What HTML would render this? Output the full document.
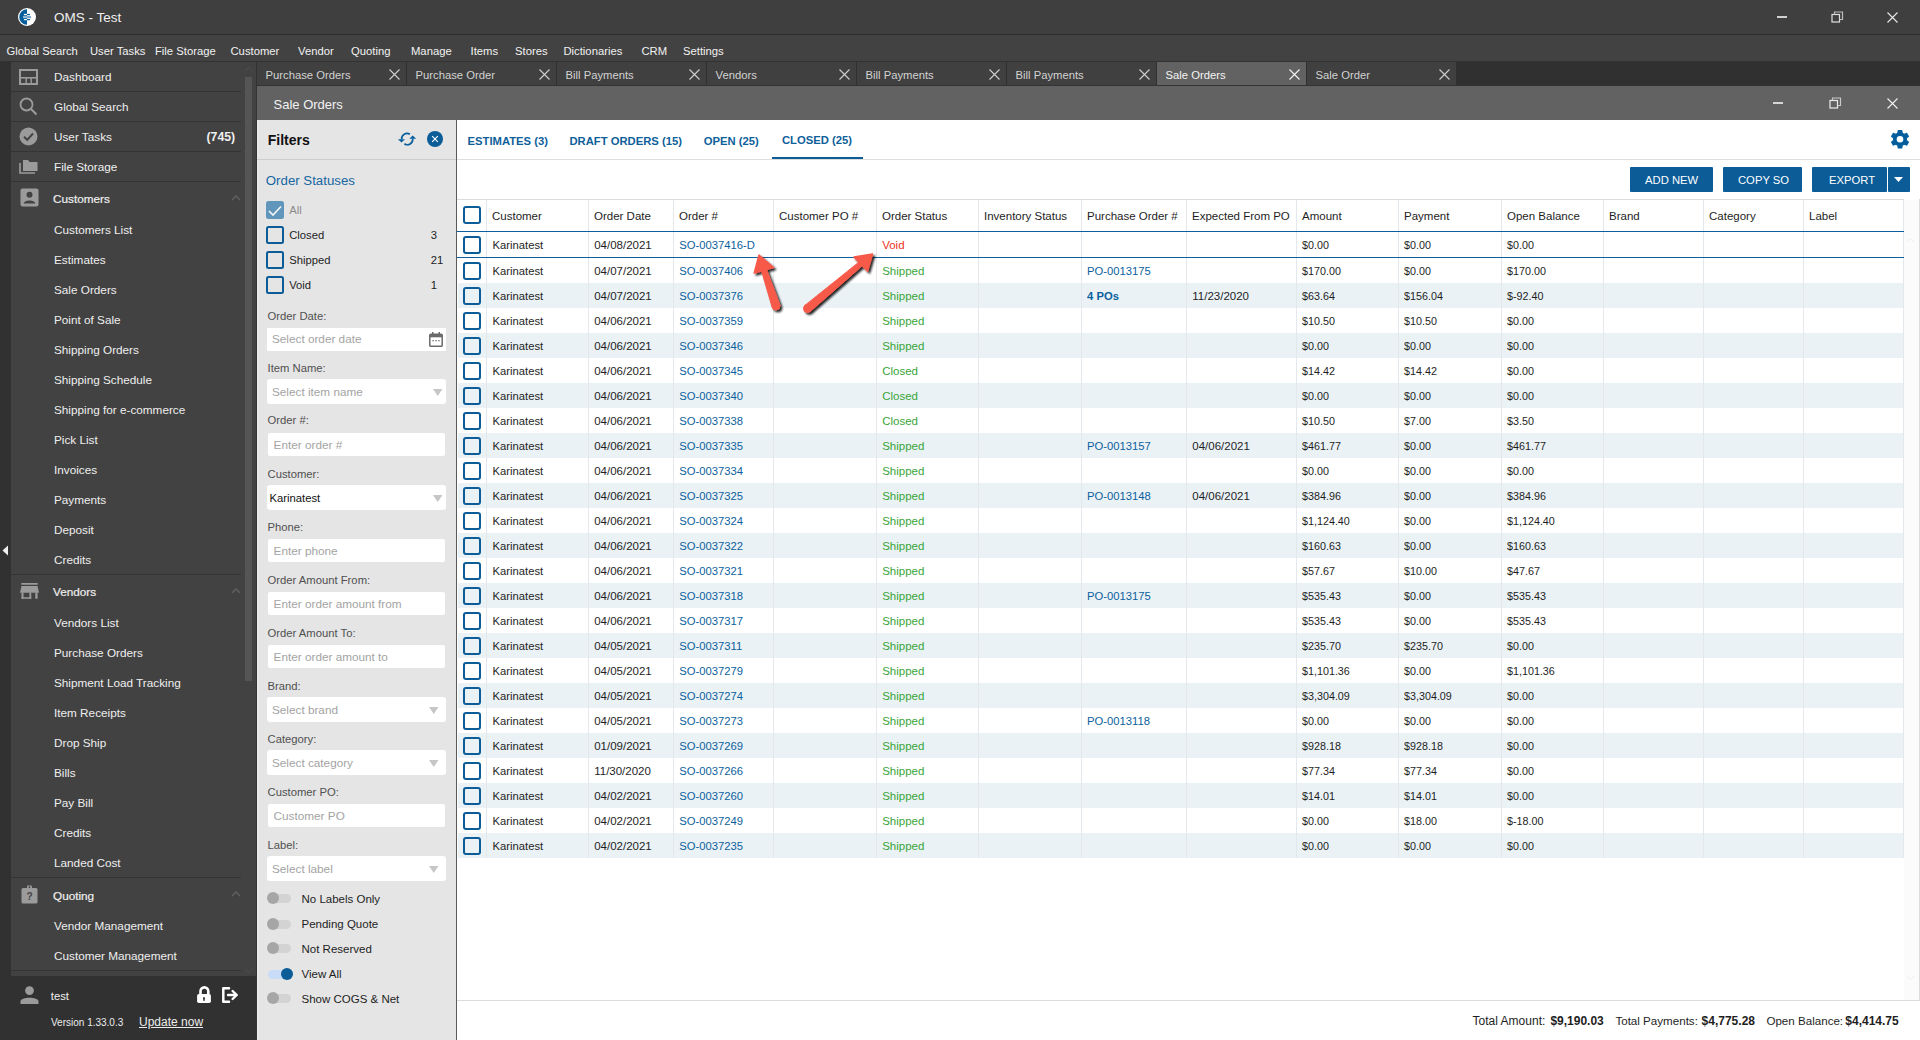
<!DOCTYPE html>
<html><head><meta charset="utf-8"><style>
html,body{margin:0;padding:0;width:1920px;height:1040px;overflow:hidden;background:#2e2e2e;}
body>div,body>svg{position:absolute;}
.t{position:absolute;font-family:"Liberation Sans", sans-serif;line-height:20px;white-space:pre;}
</style></head><body>
<div style="left:0px;top:0px;width:1920px;height:34px;background:#3f3f3f;"></div>
<div style="left:0px;top:34px;width:1920px;height:1px;background:#2c2c2c;"></div>
<div style="left:0px;top:35px;width:1920px;height:26px;background:#424242;"></div>
<div style="left:0px;top:61px;width:1920px;height:1px;background:#323232;"></div>
<div style="left:0px;top:62px;width:11px;height:978px;background:#313131;"></div>
<div style="left:11px;top:62px;width:245px;height:914px;background:#424242;"></div>
<div style="left:245px;top:77px;width:7px;height:604px;background:#555555;"></div>
<div style="left:256px;top:62px;width:1px;height:978px;background:#333333;"></div>
<div style="left:0px;top:976px;width:256px;height:64px;background:#313131;"></div>
<div style="left:257px;top:62px;width:1663px;height:24px;background:#303030;"></div>
<div style="left:257px;top:86px;width:1663px;height:34px;background:#626262;"></div>
<div style="left:257px;top:120px;width:199px;height:920px;background:#e5e5e5;"></div>
<div style="left:456px;top:120px;width:1px;height:920px;background:#5a5a5a;"></div>
<div style="left:457px;top:120px;width:1463px;height:920px;background:#ffffff;"></div>
<div style="left:257px;top:120px;width:1px;height:920px;background:#ededed;"></div>
<svg style="position:absolute;left:17px;top:7px" width="20" height="20" viewBox="0 0 20 20">
<circle cx="10" cy="10" r="9" fill="#ffffff"/>
<path d="M10 2.2 A7.8 7.8 0 0 0 10 17.8 Z" fill="#045e9c"/>
<rect x="6.9" y="6.9" width="3.1" height="1.3" fill="#fff"/><rect x="10" y="6.9" width="3" height="1.3" fill="#045e9c"/>
<rect x="6" y="9.3" width="4" height="1.5" fill="#c4d7e6"/><rect x="10" y="9.3" width="4" height="1.5" fill="#4a89bb"/>
<rect x="6.9" y="11.9" width="3.1" height="1.3" fill="#fff"/><rect x="10" y="11.9" width="3" height="1.3" fill="#045e9c"/>
</svg>
<div class="t" style="left:54px;top:8.32px;font-size:13.5px;color:#f0f0f0;font-weight:400;">OMS - Test</div>
<div style="left:1777px;top:16px;width:10px;height:2px;background:#d0d0d0;"></div>
<svg style="position:absolute;left:1831px;top:11px" width="13" height="12" viewBox="0 0 13 12"><rect x="1" y="3.5" width="7.5" height="7.5" fill="none" stroke="#e0e0e0" stroke-width="1.2"/><path d="M3.5 3.5 V1 H11.5 V8.5 H8.5" fill="none" stroke="#bdbdbd" stroke-width="1.2"/></svg>
<svg style="position:absolute;left:1887px;top:12px" width="11" height="11" viewBox="0 0 11 11"><path d="M0.5 0.5 L10.5 10.5 M10.5 0.5 L0.5 10.5" stroke="#e8e8e8" stroke-width="1.1"/></svg>
<div class="t" style="left:6.5px;top:41.10px;font-size:11.25px;color:#f2f2f2;font-weight:400;">Global Search</div>
<div class="t" style="left:90px;top:41.10px;font-size:11.25px;color:#f2f2f2;font-weight:400;">User Tasks</div>
<div class="t" style="left:155px;top:41.10px;font-size:11.25px;color:#f2f2f2;font-weight:400;">File Storage</div>
<div class="t" style="left:230.5px;top:41.10px;font-size:11.25px;color:#f2f2f2;font-weight:400;">Customer</div>
<div class="t" style="left:298px;top:41.10px;font-size:11.25px;color:#f2f2f2;font-weight:400;">Vendor</div>
<div class="t" style="left:351px;top:41.10px;font-size:11.25px;color:#f2f2f2;font-weight:400;">Quoting</div>
<div class="t" style="left:411px;top:41.10px;font-size:11.25px;color:#f2f2f2;font-weight:400;">Manage</div>
<div class="t" style="left:470.5px;top:41.10px;font-size:11.25px;color:#f2f2f2;font-weight:400;">Items</div>
<div class="t" style="left:515px;top:41.10px;font-size:11.25px;color:#f2f2f2;font-weight:400;">Stores</div>
<div class="t" style="left:563.5px;top:41.10px;font-size:11.25px;color:#f2f2f2;font-weight:400;">Dictionaries</div>
<div class="t" style="left:641.5px;top:41.10px;font-size:11.25px;color:#f2f2f2;font-weight:400;">CRM</div>
<div class="t" style="left:683px;top:41.10px;font-size:11.25px;color:#f2f2f2;font-weight:400;">Settings</div>
<div style="left:11px;top:91px;width:230px;height:1px;background:#343434;"></div>
<div style="left:11px;top:121px;width:230px;height:1px;background:#343434;"></div>
<div style="left:11px;top:151px;width:230px;height:1px;background:#343434;"></div>
<div style="left:11px;top:181px;width:230px;height:1px;background:#343434;"></div>
<div style="left:11px;top:574px;width:230px;height:1px;background:#343434;"></div>
<div style="left:11px;top:877px;width:230px;height:1px;background:#343434;"></div>
<div style="left:11px;top:970px;width:230px;height:1px;background:#343434;"></div>
<div class="t" style="left:54px;top:66.93px;font-size:11.75px;color:#efefef;font-weight:400;">Dashboard</div>
<div class="t" style="left:54px;top:96.93px;font-size:11.75px;color:#efefef;font-weight:400;">Global Search</div>
<div class="t" style="left:54px;top:126.93px;font-size:11.75px;color:#efefef;font-weight:400;">User Tasks</div>
<div class="t" style="left:206.5px;top:126.76px;font-size:12.25px;color:#efefef;font-weight:700;">(745)</div>
<div class="t" style="left:54px;top:156.93px;font-size:11.75px;color:#efefef;font-weight:400;">File Storage</div>
<div class="t" style="left:53px;top:189.43px;font-size:11.75px;color:#efefef;font-weight:400;-webkit-text-stroke:0.2px #efefef;">Customers</div>
<div class="t" style="left:54px;top:219.93px;font-size:11.75px;color:#efefef;font-weight:400;">Customers List</div>
<div class="t" style="left:54px;top:249.93px;font-size:11.75px;color:#efefef;font-weight:400;">Estimates</div>
<div class="t" style="left:54px;top:279.93px;font-size:11.75px;color:#efefef;font-weight:400;">Sale Orders</div>
<div class="t" style="left:54px;top:309.93px;font-size:11.75px;color:#efefef;font-weight:400;">Point of Sale</div>
<div class="t" style="left:54px;top:339.93px;font-size:11.75px;color:#efefef;font-weight:400;">Shipping Orders</div>
<div class="t" style="left:54px;top:369.93px;font-size:11.75px;color:#efefef;font-weight:400;">Shipping Schedule</div>
<div class="t" style="left:54px;top:399.93px;font-size:11.75px;color:#efefef;font-weight:400;">Shipping for e-commerce</div>
<div class="t" style="left:54px;top:429.93px;font-size:11.75px;color:#efefef;font-weight:400;">Pick List</div>
<div class="t" style="left:54px;top:459.93px;font-size:11.75px;color:#efefef;font-weight:400;">Invoices</div>
<div class="t" style="left:54px;top:489.93px;font-size:11.75px;color:#efefef;font-weight:400;">Payments</div>
<div class="t" style="left:54px;top:519.93px;font-size:11.75px;color:#efefef;font-weight:400;">Deposit</div>
<div class="t" style="left:54px;top:549.93px;font-size:11.75px;color:#efefef;font-weight:400;">Credits</div>
<div class="t" style="left:53px;top:581.93px;font-size:11.75px;color:#efefef;font-weight:400;-webkit-text-stroke:0.2px #efefef;">Vendors</div>
<div class="t" style="left:54px;top:612.93px;font-size:11.75px;color:#efefef;font-weight:400;">Vendors List</div>
<div class="t" style="left:54px;top:642.93px;font-size:11.75px;color:#efefef;font-weight:400;">Purchase Orders</div>
<div class="t" style="left:54px;top:672.93px;font-size:11.75px;color:#efefef;font-weight:400;">Shipment Load Tracking</div>
<div class="t" style="left:54px;top:702.93px;font-size:11.75px;color:#efefef;font-weight:400;">Item Receipts</div>
<div class="t" style="left:54px;top:732.93px;font-size:11.75px;color:#efefef;font-weight:400;">Drop Ship</div>
<div class="t" style="left:54px;top:762.93px;font-size:11.75px;color:#efefef;font-weight:400;">Bills</div>
<div class="t" style="left:54px;top:792.93px;font-size:11.75px;color:#efefef;font-weight:400;">Pay Bill</div>
<div class="t" style="left:54px;top:822.93px;font-size:11.75px;color:#efefef;font-weight:400;">Credits</div>
<div class="t" style="left:54px;top:852.93px;font-size:11.75px;color:#efefef;font-weight:400;">Landed Cost</div>
<div class="t" style="left:53px;top:885.93px;font-size:11.75px;color:#efefef;font-weight:400;-webkit-text-stroke:0.2px #efefef;">Quoting</div>
<div class="t" style="left:54px;top:915.93px;font-size:11.75px;color:#efefef;font-weight:400;">Vendor Management</div>
<div class="t" style="left:54px;top:945.93px;font-size:11.75px;color:#efefef;font-weight:400;">Customer Management</div>
<svg style="position:absolute;left:231px;top:194px" width="10" height="7" viewBox="0 0 10 7"><path d="M1 6 L5 2 L9 6" fill="none" stroke="#5e5e5e" stroke-width="1.6"/></svg>
<svg style="position:absolute;left:231px;top:587px" width="10" height="7" viewBox="0 0 10 7"><path d="M1 6 L5 2 L9 6" fill="none" stroke="#5e5e5e" stroke-width="1.6"/></svg>
<svg style="position:absolute;left:231px;top:890px" width="10" height="7" viewBox="0 0 10 7"><path d="M1 6 L5 2 L9 6" fill="none" stroke="#5e5e5e" stroke-width="1.6"/></svg>
<svg style="position:absolute;left:244px;top:66px" width="9" height="6" viewBox="0 0 9 6"><path d="M1 5 L4.5 1.5 L8 5" fill="none" stroke="#4e4e4e" stroke-width="1"/></svg>
<svg style="position:absolute;left:244px;top:968px" width="9" height="6" viewBox="0 0 9 6"><path d="M1 1 L4.5 4.5 L8 1" fill="none" stroke="#4e4e4e" stroke-width="1"/></svg>
<svg style="position:absolute;left:2px;top:545px" width="7" height="11" viewBox="0 0 7 11"><path d="M6 0.5 L0.5 5.5 L6 10.5 Z" fill="#f0f0f0"/></svg>
<svg style="position:absolute;left:19px;top:69px" width="19" height="16" viewBox="0 0 19 16"><rect x="1" y="1" width="17" height="14" fill="none" stroke="#9b9b9b" stroke-width="2"/><rect x="1" y="8" width="17" height="1.6" fill="#9b9b9b"/><rect x="6.5" y="8" width="1.4" height="7" fill="#9b9b9b"/><rect x="11.5" y="8" width="1.4" height="7" fill="#9b9b9b"/></svg>
<svg style="position:absolute;left:19px;top:97px" width="19" height="19" viewBox="0 0 19 19"><circle cx="7.5" cy="7.5" r="6" fill="none" stroke="#9b9b9b" stroke-width="1.8"/><path d="M11.8 11.8 L17.5 17.5" stroke="#9b9b9b" stroke-width="2"/></svg>
<svg style="position:absolute;left:19px;top:127px" width="19" height="19" viewBox="0 0 19 19"><circle cx="9.5" cy="9.5" r="9" fill="#9b9b9b"/><path d="M5 9.8 L8.2 12.8 L14 6.5" fill="none" stroke="#424242" stroke-width="1.9"/></svg>
<svg style="position:absolute;left:19px;top:159px" width="19" height="15" viewBox="0 0 19 15"><path d="M4 1 H9 L10.5 3 H18.5 V12 H4 Z" fill="#9b9b9b"/><path d="M1 4 V14 H16" fill="none" stroke="#9b9b9b" stroke-width="1.6"/></svg>
<svg style="position:absolute;left:20px;top:188px" width="19" height="19" viewBox="0 0 19 19"><rect x="0.5" y="0.5" width="18" height="18" rx="2" fill="#9b9b9b"/><circle cx="9.5" cy="6.8" r="3" fill="#424242"/><path d="M3.8 15.5 C4 11.5 15 11.5 15.2 15.5 Z" fill="#424242"/></svg>
<svg style="position:absolute;left:20px;top:582px" width="20" height="18" viewBox="0 0 20 18"><g fill="#9b9b9b"><rect x="1.25" y="1" width="16.35" height="1.75"/><path d="M1.5 4.1 H17.5 L19 10.75 H0 Z"/><rect x="1.5" y="10.5" width="2" height="6.25"/><rect x="1.5" y="15.25" width="9.75" height="1.5"/><rect x="9.4" y="10.5" width="1.85" height="6.25"/><rect x="15.25" y="10.5" width="2.35" height="6.25"/></g></svg>
<svg style="position:absolute;left:21px;top:885px" width="17" height="19" viewBox="0 0 17 19"><rect x="0.5" y="3" width="16" height="15.5" rx="1.5" fill="#9b9b9b"/><rect x="6" y="0.5" width="5" height="4" rx="1" fill="#9b9b9b"/><circle cx="8.5" cy="2.2" r="0.9" fill="#424242"/><text x="8.5" y="14.8" font-family="Liberation Sans" font-size="10" font-weight="700" fill="#424242" text-anchor="middle">?</text></svg>
<svg style="position:absolute;left:20px;top:986px" width="19" height="18" viewBox="0 0 19 18"><circle cx="9.5" cy="4.6" r="4.4" fill="#9b9b9b"/><path d="M0.5 18 V15.5 C0.5 10.5 18.5 10.5 18.5 15.5 V18 Z" fill="#9b9b9b"/></svg>
<div class="t" style="left:50.8px;top:986.10px;font-size:11.25px;color:#f0f0f0;font-weight:400;">test</div>
<svg style="position:absolute;left:197px;top:986px" width="15" height="18" viewBox="0 0 15 18"><path d="M3.5 8.5 V5.3 A3.9 3.9 0 0 1 11.3 5.3 V8.5" fill="none" stroke="#ffffff" stroke-width="2.6"/><rect x="0.1" y="8" width="13.8" height="9" rx="1.8" fill="#ffffff"/><path d="M6.1 12.8 A1 1 0 1 1 7.9 12.8 L7.5 15 H6.5 Z" fill="#313131"/></svg>
<svg style="position:absolute;left:221px;top:986px" width="18" height="18" viewBox="0 0 18 18"><path d="M8 2.3 H2.3 V15.7 H8" fill="none" stroke="#ffffff" stroke-width="2.5" stroke-linejoin="round" stroke-linecap="round"/><path d="M7 9 H15.5 M11.6 5 L15.8 9 L11.6 13" fill="none" stroke="#ffffff" stroke-width="2.4" stroke-linecap="round" stroke-linejoin="round"/></svg>
<div class="t" style="left:51px;top:1012.53px;font-size:10px;color:#ececec;font-weight:400;">Version 1.33.0.3</div>
<div class="t" style="left:139px;top:1011.84px;font-size:12px;color:#ececec;font-weight:400;text-decoration:underline;">Update now</div>
<div class="t" style="left:273.5px;top:94.50px;font-size:13px;color:#f2f2f2;font-weight:400;">Sale Orders</div>
<div style="left:1773px;top:102px;width:10px;height:2px;background:#d6d6d6;"></div>
<svg style="position:absolute;left:1829px;top:97px" width="13" height="12" viewBox="0 0 13 12"><rect x="1" y="3.5" width="7.5" height="7.5" fill="none" stroke="#ececec" stroke-width="1.2"/><path d="M3.5 3.5 V1 H11.5 V8.5 H8.5" fill="none" stroke="#c8c8c8" stroke-width="1.2"/></svg>
<svg style="position:absolute;left:1887px;top:98px" width="11" height="11" viewBox="0 0 11 11"><path d="M0.5 0.5 L10.5 10.5 M10.5 0.5 L0.5 10.5" stroke="#f0f0f0" stroke-width="1.1"/></svg>
<div style="left:257px;top:62px;width:149px;height:23px;background:#404040;"></div>
<div class="t" style="left:265.5px;top:65.10px;font-size:11.25px;color:#d2d2d2;font-weight:400;">Purchase Orders</div>
<svg style="position:absolute;left:389px;top:69px" width="11" height="11" viewBox="0 0 11 11"><path d="M0.5 0.5 L10.5 10.5 M10.5 0.5 L0.5 10.5" stroke="#d0d0d0" stroke-width="1.1"/></svg>
<div style="left:407px;top:62px;width:149px;height:23px;background:#404040;"></div>
<div class="t" style="left:415.5px;top:65.10px;font-size:11.25px;color:#d2d2d2;font-weight:400;">Purchase Order</div>
<svg style="position:absolute;left:539px;top:69px" width="11" height="11" viewBox="0 0 11 11"><path d="M0.5 0.5 L10.5 10.5 M10.5 0.5 L0.5 10.5" stroke="#d0d0d0" stroke-width="1.1"/></svg>
<div style="left:557px;top:62px;width:149px;height:23px;background:#404040;"></div>
<div class="t" style="left:565.5px;top:65.10px;font-size:11.25px;color:#d2d2d2;font-weight:400;">Bill Payments</div>
<svg style="position:absolute;left:689px;top:69px" width="11" height="11" viewBox="0 0 11 11"><path d="M0.5 0.5 L10.5 10.5 M10.5 0.5 L0.5 10.5" stroke="#d0d0d0" stroke-width="1.1"/></svg>
<div style="left:707px;top:62px;width:149px;height:23px;background:#404040;"></div>
<div class="t" style="left:715.5px;top:65.10px;font-size:11.25px;color:#d2d2d2;font-weight:400;">Vendors</div>
<svg style="position:absolute;left:839px;top:69px" width="11" height="11" viewBox="0 0 11 11"><path d="M0.5 0.5 L10.5 10.5 M10.5 0.5 L0.5 10.5" stroke="#d0d0d0" stroke-width="1.1"/></svg>
<div style="left:857px;top:62px;width:149px;height:23px;background:#404040;"></div>
<div class="t" style="left:865.5px;top:65.10px;font-size:11.25px;color:#d2d2d2;font-weight:400;">Bill Payments</div>
<svg style="position:absolute;left:989px;top:69px" width="11" height="11" viewBox="0 0 11 11"><path d="M0.5 0.5 L10.5 10.5 M10.5 0.5 L0.5 10.5" stroke="#d0d0d0" stroke-width="1.1"/></svg>
<div style="left:1007px;top:62px;width:149px;height:23px;background:#404040;"></div>
<div class="t" style="left:1015.5px;top:65.10px;font-size:11.25px;color:#d2d2d2;font-weight:400;">Bill Payments</div>
<svg style="position:absolute;left:1139px;top:69px" width="11" height="11" viewBox="0 0 11 11"><path d="M0.5 0.5 L10.5 10.5 M10.5 0.5 L0.5 10.5" stroke="#d0d0d0" stroke-width="1.1"/></svg>
<div style="left:1157px;top:62px;width:149px;height:23px;background:#626262;"></div>
<div class="t" style="left:1165.5px;top:65.10px;font-size:11.25px;color:#f4f4f4;font-weight:400;">Sale Orders</div>
<svg style="position:absolute;left:1289px;top:69px" width="11" height="11" viewBox="0 0 11 11"><path d="M0.5 0.5 L10.5 10.5 M10.5 0.5 L0.5 10.5" stroke="#f4f4f4" stroke-width="1.1"/></svg>
<div style="left:1307px;top:62px;width:149px;height:23px;background:#404040;"></div>
<div class="t" style="left:1315.5px;top:65.10px;font-size:11.25px;color:#d2d2d2;font-weight:400;">Sale Order</div>
<svg style="position:absolute;left:1439px;top:69px" width="11" height="11" viewBox="0 0 11 11"><path d="M0.5 0.5 L10.5 10.5 M10.5 0.5 L0.5 10.5" stroke="#d0d0d0" stroke-width="1.1"/></svg>
<div style="left:257px;top:85px;width:1663px;height:1px;background:#333333;"></div>
<div class="t" style="left:267.7px;top:129.75px;font-size:14px;color:#111111;font-weight:700;">Filters</div>
<svg style="position:absolute;left:394px;top:128px" width="24" height="20" viewBox="0 0 24 20"><g fill="none" stroke="#0b5f9c" stroke-width="1.7"><path d="M15.9 6.3 A5.3 5.3 0 0 0 7.7 11.3"/><path d="M10.4 15.7 A5.3 5.3 0 0 0 18.7 10.7"/></g><g fill="#0b5f9c"><path d="M3.9 11.2 H11 L7.5 14.6 Z"/><path d="M15.2 10.8 H22.2 L18.7 7.4 Z"/></g></svg>
<svg style="position:absolute;left:427px;top:131px" width="16" height="16" viewBox="0 0 16 16"><circle cx="8" cy="8" r="8" fill="#0b5c97"/><path d="M5.2 5.2 L10.8 10.8 M10.8 5.2 L5.2 10.8" stroke="#fff" stroke-width="1.15"/></svg>
<div style="left:257px;top:159px;width:199px;height:1px;background:#cdcdcd;"></div>
<div class="t" style="left:265.8px;top:171.41px;font-size:13.25px;color:#1565a2;font-weight:400;">Order Statuses</div>
<div style="left:266px;top:201px;width:18px;height:18px;background:#6096bb;border-radius:2.5px;"></div>
<svg style="position:absolute;left:266px;top:201px" width="18" height="18" viewBox="0 0 18 18"><path d="M3 10 L7 14 L15 5.5" fill="none" stroke="#f4f4f4" stroke-width="1.7"/></svg>
<div class="t" style="left:289.2px;top:200.10px;font-size:11.25px;color:#8c8c8c;font-weight:400;">All</div>
<div style="left:266px;top:226px;width:18px;height:18px;background:transparent;box-sizing:border-box;border:2px solid #0b5c97;border-radius:2.5px;"></div>
<div class="t" style="left:289.2px;top:225.10px;font-size:11.25px;color:#1e1e1e;font-weight:400;">Closed</div>
<div class="t" style="left:430.8px;top:225.10px;font-size:11.25px;color:#1e1e1e;font-weight:400;">3</div>
<div style="left:266px;top:251px;width:18px;height:18px;background:transparent;box-sizing:border-box;border:2px solid #0b5c97;border-radius:2.5px;"></div>
<div class="t" style="left:289.2px;top:250.10px;font-size:11.25px;color:#1e1e1e;font-weight:400;">Shipped</div>
<div class="t" style="left:430.8px;top:250.10px;font-size:11.25px;color:#1e1e1e;font-weight:400;">21</div>
<div style="left:266px;top:276px;width:18px;height:18px;background:transparent;box-sizing:border-box;border:2px solid #0b5c97;border-radius:2.5px;"></div>
<div class="t" style="left:289.2px;top:275.10px;font-size:11.25px;color:#1e1e1e;font-weight:400;">Void</div>
<div class="t" style="left:430.8px;top:275.10px;font-size:11.25px;color:#1e1e1e;font-weight:400;">1</div>
<div class="t" style="left:267.6px;top:306.30px;font-size:11.25px;color:#505050;font-weight:400;">Order Date:</div>
<div style="left:267px;top:328px;width:179px;height:23px;background:#ffffff;"></div>
<div class="t" style="left:272px;top:329.43px;font-size:11.75px;color:#a3a3a3;font-weight:400;">Select order date</div>
<svg style="position:absolute;left:429px;top:332px" width="14" height="15" viewBox="0 0 14 15"><rect x="0.8" y="2.3" width="12.4" height="12" rx="1" fill="none" stroke="#6a6a6a" stroke-width="1.5"/><rect x="0.8" y="2.3" width="12.4" height="3" fill="#6a6a6a"/><rect x="3" y="0" width="1.5" height="3" fill="#6a6a6a"/><rect x="9.5" y="0" width="1.5" height="3" fill="#6a6a6a"/><rect x="3.5" y="8" width="1.3" height="1.3" fill="#6a6a6a"/><rect x="6.4" y="8" width="1.3" height="1.3" fill="#6a6a6a"/><rect x="9.3" y="8" width="1.3" height="1.3" fill="#6a6a6a"/></svg>
<div class="t" style="left:267.6px;top:357.80px;font-size:11.25px;color:#505050;font-weight:400;">Item Name:</div>
<div style="left:267px;top:379px;width:179px;height:25px;background:#ffffff;border-radius:3px;"></div>
<div class="t" style="left:272px;top:381.93px;font-size:11.75px;color:#a3a3a3;font-weight:400;">Select item name</div>
<svg style="position:absolute;left:432.5px;top:389px" width="10" height="7" viewBox="0 0 10 7"><path d="M0 0 H9.5 L4.75 7 Z" fill="#c6c6c6"/></svg>
<div class="t" style="left:267.6px;top:410.10px;font-size:11.25px;color:#505050;font-weight:400;">Order #:</div>
<div style="left:268px;top:433px;width:177px;height:23px;background:#ffffff;border-radius:2px;"></div>
<div class="t" style="left:273.6px;top:434.93px;font-size:11.75px;color:#a3a3a3;font-weight:400;">Enter order #</div>
<div class="t" style="left:267.6px;top:463.90px;font-size:11.25px;color:#505050;font-weight:400;">Customer:</div>
<div style="left:267px;top:485px;width:179px;height:25px;background:#ffffff;border-radius:3px;"></div>
<div class="t" style="left:269.6px;top:487.70px;font-size:11.25px;color:#111111;font-weight:400;">Karinatest</div>
<svg style="position:absolute;left:432.5px;top:495px" width="10" height="7" viewBox="0 0 10 7"><path d="M0 0 H9.5 L4.75 7 Z" fill="#c6c6c6"/></svg>
<div class="t" style="left:267.6px;top:516.80px;font-size:11.25px;color:#505050;font-weight:400;">Phone:</div>
<div style="left:268px;top:539px;width:177px;height:23px;background:#ffffff;border-radius:2px;"></div>
<div class="t" style="left:273.6px;top:540.93px;font-size:11.75px;color:#a3a3a3;font-weight:400;">Enter phone</div>
<div class="t" style="left:267.6px;top:569.50px;font-size:11.25px;color:#505050;font-weight:400;">Order Amount From:</div>
<div style="left:268px;top:592px;width:177px;height:23px;background:#ffffff;border-radius:2px;"></div>
<div class="t" style="left:273.6px;top:593.93px;font-size:11.75px;color:#a3a3a3;font-weight:400;">Enter order amount from</div>
<div class="t" style="left:267.6px;top:622.90px;font-size:11.25px;color:#505050;font-weight:400;">Order Amount To:</div>
<div style="left:268px;top:645px;width:177px;height:23px;background:#ffffff;border-radius:2px;"></div>
<div class="t" style="left:273.6px;top:646.93px;font-size:11.75px;color:#a3a3a3;font-weight:400;">Enter order amount to</div>
<div class="t" style="left:267.6px;top:676.10px;font-size:11.25px;color:#505050;font-weight:400;">Brand:</div>
<div style="left:267px;top:697px;width:179px;height:25px;background:#ffffff;border-radius:3px;"></div>
<div class="t" style="left:272px;top:699.93px;font-size:11.75px;color:#a3a3a3;font-weight:400;">Select brand</div>
<svg style="position:absolute;left:428.5px;top:707px" width="10" height="7" viewBox="0 0 10 7"><path d="M0 0 H9.5 L4.75 7 Z" fill="#c6c6c6"/></svg>
<div class="t" style="left:267.6px;top:728.90px;font-size:11.25px;color:#505050;font-weight:400;">Category:</div>
<div style="left:267px;top:750px;width:179px;height:25px;background:#ffffff;border-radius:3px;"></div>
<div class="t" style="left:272px;top:752.93px;font-size:11.75px;color:#a3a3a3;font-weight:400;">Select category</div>
<svg style="position:absolute;left:428.5px;top:760px" width="10" height="7" viewBox="0 0 10 7"><path d="M0 0 H9.5 L4.75 7 Z" fill="#c6c6c6"/></svg>
<div class="t" style="left:267.6px;top:782.10px;font-size:11.25px;color:#505050;font-weight:400;">Customer PO:</div>
<div style="left:268px;top:804px;width:177px;height:23px;background:#ffffff;border-radius:2px;"></div>
<div class="t" style="left:273.6px;top:805.93px;font-size:11.75px;color:#a3a3a3;font-weight:400;">Customer PO</div>
<div class="t" style="left:267.6px;top:835.10px;font-size:11.25px;color:#505050;font-weight:400;">Label:</div>
<div style="left:267px;top:856px;width:179px;height:25px;background:#ffffff;border-radius:3px;"></div>
<div class="t" style="left:272px;top:858.93px;font-size:11.75px;color:#a3a3a3;font-weight:400;">Select label</div>
<svg style="position:absolute;left:428.5px;top:866px" width="10" height="7" viewBox="0 0 10 7"><path d="M0 0 H9.5 L4.75 7 Z" fill="#c6c6c6"/></svg>
<div style="left:268px;top:894px;width:23px;height:9px;background:#d3d3d3;border-radius:4.5px;"></div>
<div style="left:267px;top:892px;width:12px;height:12px;background:#a6a6a6;border-radius:6px;"></div>
<div class="t" style="left:301.5px;top:889.12px;font-size:11.5px;color:#1e1e1e;font-weight:400;">No Labels Only</div>
<div style="left:268px;top:920px;width:23px;height:9px;background:#d3d3d3;border-radius:4.5px;"></div>
<div style="left:267px;top:918px;width:12px;height:12px;background:#a6a6a6;border-radius:6px;"></div>
<div class="t" style="left:301.5px;top:914.42px;font-size:11.5px;color:#1e1e1e;font-weight:400;">Pending Quote</div>
<div style="left:268px;top:944px;width:23px;height:9px;background:#d3d3d3;border-radius:4.5px;"></div>
<div style="left:267px;top:942px;width:12px;height:12px;background:#a6a6a6;border-radius:6px;"></div>
<div class="t" style="left:301.5px;top:939.12px;font-size:11.5px;color:#1e1e1e;font-weight:400;">Not Reserved</div>
<div style="left:268px;top:970px;width:23px;height:9px;background:#c9dcf7;border-radius:4.5px;"></div>
<div style="left:281px;top:968px;width:12px;height:12px;background:#0b5c97;border-radius:6px;"></div>
<div class="t" style="left:301.5px;top:964.12px;font-size:11.5px;color:#1e1e1e;font-weight:400;">View All</div>
<div style="left:268px;top:994px;width:23px;height:9px;background:#d3d3d3;border-radius:4.5px;"></div>
<div style="left:267px;top:992px;width:12px;height:12px;background:#a6a6a6;border-radius:6px;"></div>
<div class="t" style="left:301.5px;top:989.12px;font-size:11.5px;color:#1e1e1e;font-weight:400;">Show COGS &amp; Net</div>
<div class="t" style="left:467.5px;top:130.80px;font-size:11.25px;color:#0f5f9b;font-weight:700;">ESTIMATES (3)</div>
<div class="t" style="left:569.5px;top:130.80px;font-size:11.25px;color:#0f5f9b;font-weight:700;">DRAFT ORDERS (15)</div>
<div class="t" style="left:703.8px;top:130.80px;font-size:11.25px;color:#0f5f9b;font-weight:700;">OPEN (25)</div>
<div class="t" style="left:782px;top:130.10px;font-size:11.25px;color:#0f5f9b;font-weight:700;">CLOSED (25)</div>
<div style="left:457px;top:159px;width:1463px;height:1px;background:#dedede;"></div>
<div style="left:772px;top:157px;width:91px;height:2px;background:#0b5c97;"></div>
<svg style="position:absolute;left:1890px;top:129px" width="20" height="20" viewBox="0 0 20 20">
<g fill="#045e9c"><circle cx="10" cy="10.2" r="7"/>
<path d="M7.8 0.9 H12.2 L12.8 4 H7.2 Z"/><path d="M7.8 19.5 H12.2 L12.8 16.4 H7.2 Z"/>
<g transform="rotate(60 10 10.2)"><path d="M7.8 0.9 H12.2 L12.8 4 H7.2 Z"/><path d="M7.8 19.5 H12.2 L12.8 16.4 H7.2 Z"/></g>
<g transform="rotate(120 10 10.2)"><path d="M7.8 0.9 H12.2 L12.8 4 H7.2 Z"/><path d="M7.8 19.5 H12.2 L12.8 16.4 H7.2 Z"/></g>
</g><circle cx="10" cy="10.2" r="3.3" fill="#fff"/></svg>
<div style="left:1630px;top:167px;width:83px;height:25px;background:#0b5c97;border-radius:1px;"></div>
<div class="t" style="left:1645px;top:170.10px;font-size:11.25px;color:#ffffff;font-weight:400;">ADD NEW</div>
<div style="left:1723px;top:167px;width:79px;height:25px;background:#0b5c97;border-radius:1px;"></div>
<div class="t" style="left:1738px;top:170.10px;font-size:11.25px;color:#ffffff;font-weight:400;">COPY SO</div>
<div style="left:1812px;top:167px;width:75px;height:25px;background:#0b5c97;border-radius:1px;"></div>
<div class="t" style="left:1829px;top:170.10px;font-size:11.25px;color:#ffffff;font-weight:400;">EXPORT</div>
<div style="left:1888px;top:167px;width:22px;height:25px;background:#0b5c97;border-radius:1px;"></div>
<svg style="position:absolute;left:1894px;top:177px" width="9" height="5" viewBox="0 0 9 5"><path d="M0 0 H9 L4.5 5 Z" fill="#fff"/></svg>
<div style="left:457px;top:199px;width:1447px;height:1px;background:#dcdcdc;"></div>
<div style="left:458px;top:283px;width:1445px;height:25px;background:#eaf2f6;"></div>
<div style="left:458px;top:333px;width:1445px;height:25px;background:#eaf2f6;"></div>
<div style="left:458px;top:383px;width:1445px;height:25px;background:#eaf2f6;"></div>
<div style="left:458px;top:433px;width:1445px;height:25px;background:#eaf2f6;"></div>
<div style="left:458px;top:483px;width:1445px;height:25px;background:#eaf2f6;"></div>
<div style="left:458px;top:533px;width:1445px;height:25px;background:#eaf2f6;"></div>
<div style="left:458px;top:583px;width:1445px;height:25px;background:#eaf2f6;"></div>
<div style="left:458px;top:633px;width:1445px;height:25px;background:#eaf2f6;"></div>
<div style="left:458px;top:683px;width:1445px;height:25px;background:#eaf2f6;"></div>
<div style="left:458px;top:733px;width:1445px;height:25px;background:#eaf2f6;"></div>
<div style="left:458px;top:783px;width:1445px;height:25px;background:#eaf2f6;"></div>
<div style="left:458px;top:833px;width:1445px;height:25px;background:#eaf2f6;"></div>
<div style="left:486px;top:200px;width:1px;height:658px;background:#e3e8ec;"></div>
<div style="left:588px;top:200px;width:1px;height:658px;background:#e3e8ec;"></div>
<div style="left:673px;top:200px;width:1px;height:658px;background:#e3e8ec;"></div>
<div style="left:773px;top:200px;width:1px;height:658px;background:#e3e8ec;"></div>
<div style="left:876px;top:200px;width:1px;height:658px;background:#e3e8ec;"></div>
<div style="left:978px;top:200px;width:1px;height:658px;background:#e3e8ec;"></div>
<div style="left:1081px;top:200px;width:1px;height:658px;background:#e3e8ec;"></div>
<div style="left:1186px;top:200px;width:1px;height:658px;background:#e3e8ec;"></div>
<div style="left:1296px;top:200px;width:1px;height:658px;background:#e3e8ec;"></div>
<div style="left:1398px;top:200px;width:1px;height:658px;background:#e3e8ec;"></div>
<div style="left:1501px;top:200px;width:1px;height:658px;background:#e3e8ec;"></div>
<div style="left:1603px;top:200px;width:1px;height:658px;background:#e3e8ec;"></div>
<div style="left:1703px;top:200px;width:1px;height:658px;background:#e3e8ec;"></div>
<div style="left:1803px;top:200px;width:1px;height:658px;background:#e3e8ec;"></div>
<div style="left:1903px;top:200px;width:1px;height:658px;background:#e3e8ec;"></div>
<div style="left:457px;top:231px;width:1447px;height:1px;background:#0d5e9a;"></div>
<div style="left:457px;top:257px;width:1447px;height:1px;background:#0d5e9a;"></div>
<div class="t" style="left:492px;top:206.02px;font-size:11.5px;color:#1e1e1e;font-weight:400;">Customer</div>
<div class="t" style="left:594px;top:206.02px;font-size:11.5px;color:#1e1e1e;font-weight:400;">Order Date</div>
<div class="t" style="left:679px;top:206.02px;font-size:11.5px;color:#1e1e1e;font-weight:400;">Order #</div>
<div class="t" style="left:779px;top:206.02px;font-size:11.5px;color:#1e1e1e;font-weight:400;">Customer PO #</div>
<div class="t" style="left:882px;top:206.02px;font-size:11.5px;color:#1e1e1e;font-weight:400;">Order Status</div>
<div class="t" style="left:984px;top:206.02px;font-size:11.5px;color:#1e1e1e;font-weight:400;">Inventory Status</div>
<div class="t" style="left:1087px;top:206.02px;font-size:11.5px;color:#1e1e1e;font-weight:400;">Purchase Order #</div>
<div class="t" style="left:1192px;top:206.02px;font-size:11.5px;color:#1e1e1e;font-weight:400;">Expected From PO</div>
<div class="t" style="left:1302px;top:206.02px;font-size:11.5px;color:#1e1e1e;font-weight:400;">Amount</div>
<div class="t" style="left:1404px;top:206.02px;font-size:11.5px;color:#1e1e1e;font-weight:400;">Payment</div>
<div class="t" style="left:1507px;top:206.02px;font-size:11.5px;color:#1e1e1e;font-weight:400;">Open Balance</div>
<div class="t" style="left:1609px;top:206.02px;font-size:11.5px;color:#1e1e1e;font-weight:400;">Brand</div>
<div class="t" style="left:1709px;top:206.02px;font-size:11.5px;color:#1e1e1e;font-weight:400;">Category</div>
<div class="t" style="left:1809px;top:206.02px;font-size:11.5px;color:#1e1e1e;font-weight:400;">Label</div>
<div style="left:463px;top:206px;width:18px;height:18px;background:transparent;box-sizing:border-box;border:2px solid #0b5c97;border-radius:3px;"></div>
<div style="left:463px;top:236px;width:18px;height:18px;background:transparent;box-sizing:border-box;border:2px solid #0b5c97;border-radius:3px;"></div>
<div class="t" style="left:492.5px;top:235.10px;font-size:11.25px;color:#1e1e1e;font-weight:400;">Karinatest</div>
<div class="t" style="left:594.2px;top:235.02px;font-size:11.5px;color:#1e1e1e;font-weight:400;">04/08/2021</div>
<div class="t" style="left:679.3px;top:235.10px;font-size:11.25px;color:#0c5f9d;font-weight:400;">SO-0037416-D</div>
<div class="t" style="left:882.2px;top:235.02px;font-size:11.5px;color:#ee3226;font-weight:400;">Void</div>
<div class="t" style="left:1302px;top:235.28px;font-size:10.75px;color:#1e1e1e;font-weight:400;">$0.00</div>
<div class="t" style="left:1404px;top:235.28px;font-size:10.75px;color:#1e1e1e;font-weight:400;">$0.00</div>
<div class="t" style="left:1507px;top:235.28px;font-size:10.75px;color:#1e1e1e;font-weight:400;">$0.00</div>
<div style="left:463px;top:262px;width:18px;height:18px;background:transparent;box-sizing:border-box;border:2px solid #0b5c97;border-radius:3px;"></div>
<div class="t" style="left:492.5px;top:261.10px;font-size:11.25px;color:#1e1e1e;font-weight:400;">Karinatest</div>
<div class="t" style="left:594.2px;top:261.02px;font-size:11.5px;color:#1e1e1e;font-weight:400;">04/07/2021</div>
<div class="t" style="left:679.3px;top:261.10px;font-size:11.25px;color:#0c5f9d;font-weight:400;">SO-0037406</div>
<div class="t" style="left:882.2px;top:261.02px;font-size:11.5px;color:#38a538;font-weight:400;">Shipped</div>
<div class="t" style="left:1087px;top:261.10px;font-size:11.25px;color:#0c5f9d;font-weight:400;">PO-0013175</div>
<div class="t" style="left:1302px;top:261.28px;font-size:10.75px;color:#1e1e1e;font-weight:400;">$170.00</div>
<div class="t" style="left:1404px;top:261.28px;font-size:10.75px;color:#1e1e1e;font-weight:400;">$0.00</div>
<div class="t" style="left:1507px;top:261.28px;font-size:10.75px;color:#1e1e1e;font-weight:400;">$170.00</div>
<div style="left:463px;top:287px;width:18px;height:18px;background:transparent;box-sizing:border-box;border:2px solid #0b5c97;border-radius:3px;"></div>
<div class="t" style="left:492.5px;top:286.10px;font-size:11.25px;color:#1e1e1e;font-weight:400;">Karinatest</div>
<div class="t" style="left:594.2px;top:286.02px;font-size:11.5px;color:#1e1e1e;font-weight:400;">04/07/2021</div>
<div class="t" style="left:679.3px;top:286.10px;font-size:11.25px;color:#0c5f9d;font-weight:400;">SO-0037376</div>
<div class="t" style="left:882.2px;top:286.02px;font-size:11.5px;color:#38a538;font-weight:400;">Shipped</div>
<div class="t" style="left:1087px;top:286.10px;font-size:11.25px;color:#0c5f9d;font-weight:700;">4 POs</div>
<div class="t" style="left:1192.3px;top:286.02px;font-size:11.5px;color:#1e1e1e;font-weight:400;">11/23/2020</div>
<div class="t" style="left:1302px;top:286.28px;font-size:10.75px;color:#1e1e1e;font-weight:400;">$63.64</div>
<div class="t" style="left:1404px;top:286.28px;font-size:10.75px;color:#1e1e1e;font-weight:400;">$156.04</div>
<div class="t" style="left:1507px;top:286.28px;font-size:10.75px;color:#1e1e1e;font-weight:400;">$-92.40</div>
<div style="left:463px;top:312px;width:18px;height:18px;background:transparent;box-sizing:border-box;border:2px solid #0b5c97;border-radius:3px;"></div>
<div class="t" style="left:492.5px;top:311.10px;font-size:11.25px;color:#1e1e1e;font-weight:400;">Karinatest</div>
<div class="t" style="left:594.2px;top:311.02px;font-size:11.5px;color:#1e1e1e;font-weight:400;">04/06/2021</div>
<div class="t" style="left:679.3px;top:311.10px;font-size:11.25px;color:#0c5f9d;font-weight:400;">SO-0037359</div>
<div class="t" style="left:882.2px;top:311.02px;font-size:11.5px;color:#38a538;font-weight:400;">Shipped</div>
<div class="t" style="left:1302px;top:311.28px;font-size:10.75px;color:#1e1e1e;font-weight:400;">$10.50</div>
<div class="t" style="left:1404px;top:311.28px;font-size:10.75px;color:#1e1e1e;font-weight:400;">$10.50</div>
<div class="t" style="left:1507px;top:311.28px;font-size:10.75px;color:#1e1e1e;font-weight:400;">$0.00</div>
<div style="left:463px;top:337px;width:18px;height:18px;background:transparent;box-sizing:border-box;border:2px solid #0b5c97;border-radius:3px;"></div>
<div class="t" style="left:492.5px;top:336.10px;font-size:11.25px;color:#1e1e1e;font-weight:400;">Karinatest</div>
<div class="t" style="left:594.2px;top:336.02px;font-size:11.5px;color:#1e1e1e;font-weight:400;">04/06/2021</div>
<div class="t" style="left:679.3px;top:336.10px;font-size:11.25px;color:#0c5f9d;font-weight:400;">SO-0037346</div>
<div class="t" style="left:882.2px;top:336.02px;font-size:11.5px;color:#38a538;font-weight:400;">Shipped</div>
<div class="t" style="left:1302px;top:336.28px;font-size:10.75px;color:#1e1e1e;font-weight:400;">$0.00</div>
<div class="t" style="left:1404px;top:336.28px;font-size:10.75px;color:#1e1e1e;font-weight:400;">$0.00</div>
<div class="t" style="left:1507px;top:336.28px;font-size:10.75px;color:#1e1e1e;font-weight:400;">$0.00</div>
<div style="left:463px;top:362px;width:18px;height:18px;background:transparent;box-sizing:border-box;border:2px solid #0b5c97;border-radius:3px;"></div>
<div class="t" style="left:492.5px;top:361.10px;font-size:11.25px;color:#1e1e1e;font-weight:400;">Karinatest</div>
<div class="t" style="left:594.2px;top:361.02px;font-size:11.5px;color:#1e1e1e;font-weight:400;">04/06/2021</div>
<div class="t" style="left:679.3px;top:361.10px;font-size:11.25px;color:#0c5f9d;font-weight:400;">SO-0037345</div>
<div class="t" style="left:882.2px;top:361.02px;font-size:11.5px;color:#38a538;font-weight:400;">Closed</div>
<div class="t" style="left:1302px;top:361.28px;font-size:10.75px;color:#1e1e1e;font-weight:400;">$14.42</div>
<div class="t" style="left:1404px;top:361.28px;font-size:10.75px;color:#1e1e1e;font-weight:400;">$14.42</div>
<div class="t" style="left:1507px;top:361.28px;font-size:10.75px;color:#1e1e1e;font-weight:400;">$0.00</div>
<div style="left:463px;top:387px;width:18px;height:18px;background:transparent;box-sizing:border-box;border:2px solid #0b5c97;border-radius:3px;"></div>
<div class="t" style="left:492.5px;top:386.10px;font-size:11.25px;color:#1e1e1e;font-weight:400;">Karinatest</div>
<div class="t" style="left:594.2px;top:386.02px;font-size:11.5px;color:#1e1e1e;font-weight:400;">04/06/2021</div>
<div class="t" style="left:679.3px;top:386.10px;font-size:11.25px;color:#0c5f9d;font-weight:400;">SO-0037340</div>
<div class="t" style="left:882.2px;top:386.02px;font-size:11.5px;color:#38a538;font-weight:400;">Closed</div>
<div class="t" style="left:1302px;top:386.28px;font-size:10.75px;color:#1e1e1e;font-weight:400;">$0.00</div>
<div class="t" style="left:1404px;top:386.28px;font-size:10.75px;color:#1e1e1e;font-weight:400;">$0.00</div>
<div class="t" style="left:1507px;top:386.28px;font-size:10.75px;color:#1e1e1e;font-weight:400;">$0.00</div>
<div style="left:463px;top:412px;width:18px;height:18px;background:transparent;box-sizing:border-box;border:2px solid #0b5c97;border-radius:3px;"></div>
<div class="t" style="left:492.5px;top:411.10px;font-size:11.25px;color:#1e1e1e;font-weight:400;">Karinatest</div>
<div class="t" style="left:594.2px;top:411.02px;font-size:11.5px;color:#1e1e1e;font-weight:400;">04/06/2021</div>
<div class="t" style="left:679.3px;top:411.10px;font-size:11.25px;color:#0c5f9d;font-weight:400;">SO-0037338</div>
<div class="t" style="left:882.2px;top:411.02px;font-size:11.5px;color:#38a538;font-weight:400;">Closed</div>
<div class="t" style="left:1302px;top:411.28px;font-size:10.75px;color:#1e1e1e;font-weight:400;">$10.50</div>
<div class="t" style="left:1404px;top:411.28px;font-size:10.75px;color:#1e1e1e;font-weight:400;">$7.00</div>
<div class="t" style="left:1507px;top:411.28px;font-size:10.75px;color:#1e1e1e;font-weight:400;">$3.50</div>
<div style="left:463px;top:437px;width:18px;height:18px;background:transparent;box-sizing:border-box;border:2px solid #0b5c97;border-radius:3px;"></div>
<div class="t" style="left:492.5px;top:436.10px;font-size:11.25px;color:#1e1e1e;font-weight:400;">Karinatest</div>
<div class="t" style="left:594.2px;top:436.02px;font-size:11.5px;color:#1e1e1e;font-weight:400;">04/06/2021</div>
<div class="t" style="left:679.3px;top:436.10px;font-size:11.25px;color:#0c5f9d;font-weight:400;">SO-0037335</div>
<div class="t" style="left:882.2px;top:436.02px;font-size:11.5px;color:#38a538;font-weight:400;">Shipped</div>
<div class="t" style="left:1087px;top:436.10px;font-size:11.25px;color:#0c5f9d;font-weight:400;">PO-0013157</div>
<div class="t" style="left:1192.3px;top:436.02px;font-size:11.5px;color:#1e1e1e;font-weight:400;">04/06/2021</div>
<div class="t" style="left:1302px;top:436.28px;font-size:10.75px;color:#1e1e1e;font-weight:400;">$461.77</div>
<div class="t" style="left:1404px;top:436.28px;font-size:10.75px;color:#1e1e1e;font-weight:400;">$0.00</div>
<div class="t" style="left:1507px;top:436.28px;font-size:10.75px;color:#1e1e1e;font-weight:400;">$461.77</div>
<div style="left:463px;top:462px;width:18px;height:18px;background:transparent;box-sizing:border-box;border:2px solid #0b5c97;border-radius:3px;"></div>
<div class="t" style="left:492.5px;top:461.10px;font-size:11.25px;color:#1e1e1e;font-weight:400;">Karinatest</div>
<div class="t" style="left:594.2px;top:461.02px;font-size:11.5px;color:#1e1e1e;font-weight:400;">04/06/2021</div>
<div class="t" style="left:679.3px;top:461.10px;font-size:11.25px;color:#0c5f9d;font-weight:400;">SO-0037334</div>
<div class="t" style="left:882.2px;top:461.02px;font-size:11.5px;color:#38a538;font-weight:400;">Shipped</div>
<div class="t" style="left:1302px;top:461.28px;font-size:10.75px;color:#1e1e1e;font-weight:400;">$0.00</div>
<div class="t" style="left:1404px;top:461.28px;font-size:10.75px;color:#1e1e1e;font-weight:400;">$0.00</div>
<div class="t" style="left:1507px;top:461.28px;font-size:10.75px;color:#1e1e1e;font-weight:400;">$0.00</div>
<div style="left:463px;top:487px;width:18px;height:18px;background:transparent;box-sizing:border-box;border:2px solid #0b5c97;border-radius:3px;"></div>
<div class="t" style="left:492.5px;top:486.10px;font-size:11.25px;color:#1e1e1e;font-weight:400;">Karinatest</div>
<div class="t" style="left:594.2px;top:486.02px;font-size:11.5px;color:#1e1e1e;font-weight:400;">04/06/2021</div>
<div class="t" style="left:679.3px;top:486.10px;font-size:11.25px;color:#0c5f9d;font-weight:400;">SO-0037325</div>
<div class="t" style="left:882.2px;top:486.02px;font-size:11.5px;color:#38a538;font-weight:400;">Shipped</div>
<div class="t" style="left:1087px;top:486.10px;font-size:11.25px;color:#0c5f9d;font-weight:400;">PO-0013148</div>
<div class="t" style="left:1192.3px;top:486.02px;font-size:11.5px;color:#1e1e1e;font-weight:400;">04/06/2021</div>
<div class="t" style="left:1302px;top:486.28px;font-size:10.75px;color:#1e1e1e;font-weight:400;">$384.96</div>
<div class="t" style="left:1404px;top:486.28px;font-size:10.75px;color:#1e1e1e;font-weight:400;">$0.00</div>
<div class="t" style="left:1507px;top:486.28px;font-size:10.75px;color:#1e1e1e;font-weight:400;">$384.96</div>
<div style="left:463px;top:512px;width:18px;height:18px;background:transparent;box-sizing:border-box;border:2px solid #0b5c97;border-radius:3px;"></div>
<div class="t" style="left:492.5px;top:511.10px;font-size:11.25px;color:#1e1e1e;font-weight:400;">Karinatest</div>
<div class="t" style="left:594.2px;top:511.02px;font-size:11.5px;color:#1e1e1e;font-weight:400;">04/06/2021</div>
<div class="t" style="left:679.3px;top:511.10px;font-size:11.25px;color:#0c5f9d;font-weight:400;">SO-0037324</div>
<div class="t" style="left:882.2px;top:511.02px;font-size:11.5px;color:#38a538;font-weight:400;">Shipped</div>
<div class="t" style="left:1302px;top:511.28px;font-size:10.75px;color:#1e1e1e;font-weight:400;">$1,124.40</div>
<div class="t" style="left:1404px;top:511.28px;font-size:10.75px;color:#1e1e1e;font-weight:400;">$0.00</div>
<div class="t" style="left:1507px;top:511.28px;font-size:10.75px;color:#1e1e1e;font-weight:400;">$1,124.40</div>
<div style="left:463px;top:537px;width:18px;height:18px;background:transparent;box-sizing:border-box;border:2px solid #0b5c97;border-radius:3px;"></div>
<div class="t" style="left:492.5px;top:536.10px;font-size:11.25px;color:#1e1e1e;font-weight:400;">Karinatest</div>
<div class="t" style="left:594.2px;top:536.02px;font-size:11.5px;color:#1e1e1e;font-weight:400;">04/06/2021</div>
<div class="t" style="left:679.3px;top:536.10px;font-size:11.25px;color:#0c5f9d;font-weight:400;">SO-0037322</div>
<div class="t" style="left:882.2px;top:536.02px;font-size:11.5px;color:#38a538;font-weight:400;">Shipped</div>
<div class="t" style="left:1302px;top:536.28px;font-size:10.75px;color:#1e1e1e;font-weight:400;">$160.63</div>
<div class="t" style="left:1404px;top:536.28px;font-size:10.75px;color:#1e1e1e;font-weight:400;">$0.00</div>
<div class="t" style="left:1507px;top:536.28px;font-size:10.75px;color:#1e1e1e;font-weight:400;">$160.63</div>
<div style="left:463px;top:562px;width:18px;height:18px;background:transparent;box-sizing:border-box;border:2px solid #0b5c97;border-radius:3px;"></div>
<div class="t" style="left:492.5px;top:561.10px;font-size:11.25px;color:#1e1e1e;font-weight:400;">Karinatest</div>
<div class="t" style="left:594.2px;top:561.02px;font-size:11.5px;color:#1e1e1e;font-weight:400;">04/06/2021</div>
<div class="t" style="left:679.3px;top:561.10px;font-size:11.25px;color:#0c5f9d;font-weight:400;">SO-0037321</div>
<div class="t" style="left:882.2px;top:561.02px;font-size:11.5px;color:#38a538;font-weight:400;">Shipped</div>
<div class="t" style="left:1302px;top:561.28px;font-size:10.75px;color:#1e1e1e;font-weight:400;">$57.67</div>
<div class="t" style="left:1404px;top:561.28px;font-size:10.75px;color:#1e1e1e;font-weight:400;">$10.00</div>
<div class="t" style="left:1507px;top:561.28px;font-size:10.75px;color:#1e1e1e;font-weight:400;">$47.67</div>
<div style="left:463px;top:587px;width:18px;height:18px;background:transparent;box-sizing:border-box;border:2px solid #0b5c97;border-radius:3px;"></div>
<div class="t" style="left:492.5px;top:586.10px;font-size:11.25px;color:#1e1e1e;font-weight:400;">Karinatest</div>
<div class="t" style="left:594.2px;top:586.02px;font-size:11.5px;color:#1e1e1e;font-weight:400;">04/06/2021</div>
<div class="t" style="left:679.3px;top:586.10px;font-size:11.25px;color:#0c5f9d;font-weight:400;">SO-0037318</div>
<div class="t" style="left:882.2px;top:586.02px;font-size:11.5px;color:#38a538;font-weight:400;">Shipped</div>
<div class="t" style="left:1087px;top:586.10px;font-size:11.25px;color:#0c5f9d;font-weight:400;">PO-0013175</div>
<div class="t" style="left:1302px;top:586.28px;font-size:10.75px;color:#1e1e1e;font-weight:400;">$535.43</div>
<div class="t" style="left:1404px;top:586.28px;font-size:10.75px;color:#1e1e1e;font-weight:400;">$0.00</div>
<div class="t" style="left:1507px;top:586.28px;font-size:10.75px;color:#1e1e1e;font-weight:400;">$535.43</div>
<div style="left:463px;top:612px;width:18px;height:18px;background:transparent;box-sizing:border-box;border:2px solid #0b5c97;border-radius:3px;"></div>
<div class="t" style="left:492.5px;top:611.10px;font-size:11.25px;color:#1e1e1e;font-weight:400;">Karinatest</div>
<div class="t" style="left:594.2px;top:611.02px;font-size:11.5px;color:#1e1e1e;font-weight:400;">04/06/2021</div>
<div class="t" style="left:679.3px;top:611.10px;font-size:11.25px;color:#0c5f9d;font-weight:400;">SO-0037317</div>
<div class="t" style="left:882.2px;top:611.02px;font-size:11.5px;color:#38a538;font-weight:400;">Shipped</div>
<div class="t" style="left:1302px;top:611.28px;font-size:10.75px;color:#1e1e1e;font-weight:400;">$535.43</div>
<div class="t" style="left:1404px;top:611.28px;font-size:10.75px;color:#1e1e1e;font-weight:400;">$0.00</div>
<div class="t" style="left:1507px;top:611.28px;font-size:10.75px;color:#1e1e1e;font-weight:400;">$535.43</div>
<div style="left:463px;top:637px;width:18px;height:18px;background:transparent;box-sizing:border-box;border:2px solid #0b5c97;border-radius:3px;"></div>
<div class="t" style="left:492.5px;top:636.10px;font-size:11.25px;color:#1e1e1e;font-weight:400;">Karinatest</div>
<div class="t" style="left:594.2px;top:636.02px;font-size:11.5px;color:#1e1e1e;font-weight:400;">04/05/2021</div>
<div class="t" style="left:679.3px;top:636.10px;font-size:11.25px;color:#0c5f9d;font-weight:400;">SO-0037311</div>
<div class="t" style="left:882.2px;top:636.02px;font-size:11.5px;color:#38a538;font-weight:400;">Shipped</div>
<div class="t" style="left:1302px;top:636.28px;font-size:10.75px;color:#1e1e1e;font-weight:400;">$235.70</div>
<div class="t" style="left:1404px;top:636.28px;font-size:10.75px;color:#1e1e1e;font-weight:400;">$235.70</div>
<div class="t" style="left:1507px;top:636.28px;font-size:10.75px;color:#1e1e1e;font-weight:400;">$0.00</div>
<div style="left:463px;top:662px;width:18px;height:18px;background:transparent;box-sizing:border-box;border:2px solid #0b5c97;border-radius:3px;"></div>
<div class="t" style="left:492.5px;top:661.10px;font-size:11.25px;color:#1e1e1e;font-weight:400;">Karinatest</div>
<div class="t" style="left:594.2px;top:661.02px;font-size:11.5px;color:#1e1e1e;font-weight:400;">04/05/2021</div>
<div class="t" style="left:679.3px;top:661.10px;font-size:11.25px;color:#0c5f9d;font-weight:400;">SO-0037279</div>
<div class="t" style="left:882.2px;top:661.02px;font-size:11.5px;color:#38a538;font-weight:400;">Shipped</div>
<div class="t" style="left:1302px;top:661.28px;font-size:10.75px;color:#1e1e1e;font-weight:400;">$1,101.36</div>
<div class="t" style="left:1404px;top:661.28px;font-size:10.75px;color:#1e1e1e;font-weight:400;">$0.00</div>
<div class="t" style="left:1507px;top:661.28px;font-size:10.75px;color:#1e1e1e;font-weight:400;">$1,101.36</div>
<div style="left:463px;top:687px;width:18px;height:18px;background:transparent;box-sizing:border-box;border:2px solid #0b5c97;border-radius:3px;"></div>
<div class="t" style="left:492.5px;top:686.10px;font-size:11.25px;color:#1e1e1e;font-weight:400;">Karinatest</div>
<div class="t" style="left:594.2px;top:686.02px;font-size:11.5px;color:#1e1e1e;font-weight:400;">04/05/2021</div>
<div class="t" style="left:679.3px;top:686.10px;font-size:11.25px;color:#0c5f9d;font-weight:400;">SO-0037274</div>
<div class="t" style="left:882.2px;top:686.02px;font-size:11.5px;color:#38a538;font-weight:400;">Shipped</div>
<div class="t" style="left:1302px;top:686.28px;font-size:10.75px;color:#1e1e1e;font-weight:400;">$3,304.09</div>
<div class="t" style="left:1404px;top:686.28px;font-size:10.75px;color:#1e1e1e;font-weight:400;">$3,304.09</div>
<div class="t" style="left:1507px;top:686.28px;font-size:10.75px;color:#1e1e1e;font-weight:400;">$0.00</div>
<div style="left:463px;top:712px;width:18px;height:18px;background:transparent;box-sizing:border-box;border:2px solid #0b5c97;border-radius:3px;"></div>
<div class="t" style="left:492.5px;top:711.10px;font-size:11.25px;color:#1e1e1e;font-weight:400;">Karinatest</div>
<div class="t" style="left:594.2px;top:711.02px;font-size:11.5px;color:#1e1e1e;font-weight:400;">04/05/2021</div>
<div class="t" style="left:679.3px;top:711.10px;font-size:11.25px;color:#0c5f9d;font-weight:400;">SO-0037273</div>
<div class="t" style="left:882.2px;top:711.02px;font-size:11.5px;color:#38a538;font-weight:400;">Shipped</div>
<div class="t" style="left:1087px;top:711.10px;font-size:11.25px;color:#0c5f9d;font-weight:400;">PO-0013118</div>
<div class="t" style="left:1302px;top:711.28px;font-size:10.75px;color:#1e1e1e;font-weight:400;">$0.00</div>
<div class="t" style="left:1404px;top:711.28px;font-size:10.75px;color:#1e1e1e;font-weight:400;">$0.00</div>
<div class="t" style="left:1507px;top:711.28px;font-size:10.75px;color:#1e1e1e;font-weight:400;">$0.00</div>
<div style="left:463px;top:737px;width:18px;height:18px;background:transparent;box-sizing:border-box;border:2px solid #0b5c97;border-radius:3px;"></div>
<div class="t" style="left:492.5px;top:736.10px;font-size:11.25px;color:#1e1e1e;font-weight:400;">Karinatest</div>
<div class="t" style="left:594.2px;top:736.02px;font-size:11.5px;color:#1e1e1e;font-weight:400;">01/09/2021</div>
<div class="t" style="left:679.3px;top:736.10px;font-size:11.25px;color:#0c5f9d;font-weight:400;">SO-0037269</div>
<div class="t" style="left:882.2px;top:736.02px;font-size:11.5px;color:#38a538;font-weight:400;">Shipped</div>
<div class="t" style="left:1302px;top:736.28px;font-size:10.75px;color:#1e1e1e;font-weight:400;">$928.18</div>
<div class="t" style="left:1404px;top:736.28px;font-size:10.75px;color:#1e1e1e;font-weight:400;">$928.18</div>
<div class="t" style="left:1507px;top:736.28px;font-size:10.75px;color:#1e1e1e;font-weight:400;">$0.00</div>
<div style="left:463px;top:762px;width:18px;height:18px;background:transparent;box-sizing:border-box;border:2px solid #0b5c97;border-radius:3px;"></div>
<div class="t" style="left:492.5px;top:761.10px;font-size:11.25px;color:#1e1e1e;font-weight:400;">Karinatest</div>
<div class="t" style="left:594.2px;top:761.02px;font-size:11.5px;color:#1e1e1e;font-weight:400;">11/30/2020</div>
<div class="t" style="left:679.3px;top:761.10px;font-size:11.25px;color:#0c5f9d;font-weight:400;">SO-0037266</div>
<div class="t" style="left:882.2px;top:761.02px;font-size:11.5px;color:#38a538;font-weight:400;">Shipped</div>
<div class="t" style="left:1302px;top:761.28px;font-size:10.75px;color:#1e1e1e;font-weight:400;">$77.34</div>
<div class="t" style="left:1404px;top:761.28px;font-size:10.75px;color:#1e1e1e;font-weight:400;">$77.34</div>
<div class="t" style="left:1507px;top:761.28px;font-size:10.75px;color:#1e1e1e;font-weight:400;">$0.00</div>
<div style="left:463px;top:787px;width:18px;height:18px;background:transparent;box-sizing:border-box;border:2px solid #0b5c97;border-radius:3px;"></div>
<div class="t" style="left:492.5px;top:786.10px;font-size:11.25px;color:#1e1e1e;font-weight:400;">Karinatest</div>
<div class="t" style="left:594.2px;top:786.02px;font-size:11.5px;color:#1e1e1e;font-weight:400;">04/02/2021</div>
<div class="t" style="left:679.3px;top:786.10px;font-size:11.25px;color:#0c5f9d;font-weight:400;">SO-0037260</div>
<div class="t" style="left:882.2px;top:786.02px;font-size:11.5px;color:#38a538;font-weight:400;">Shipped</div>
<div class="t" style="left:1302px;top:786.28px;font-size:10.75px;color:#1e1e1e;font-weight:400;">$14.01</div>
<div class="t" style="left:1404px;top:786.28px;font-size:10.75px;color:#1e1e1e;font-weight:400;">$14.01</div>
<div class="t" style="left:1507px;top:786.28px;font-size:10.75px;color:#1e1e1e;font-weight:400;">$0.00</div>
<div style="left:463px;top:812px;width:18px;height:18px;background:transparent;box-sizing:border-box;border:2px solid #0b5c97;border-radius:3px;"></div>
<div class="t" style="left:492.5px;top:811.10px;font-size:11.25px;color:#1e1e1e;font-weight:400;">Karinatest</div>
<div class="t" style="left:594.2px;top:811.02px;font-size:11.5px;color:#1e1e1e;font-weight:400;">04/02/2021</div>
<div class="t" style="left:679.3px;top:811.10px;font-size:11.25px;color:#0c5f9d;font-weight:400;">SO-0037249</div>
<div class="t" style="left:882.2px;top:811.02px;font-size:11.5px;color:#38a538;font-weight:400;">Shipped</div>
<div class="t" style="left:1302px;top:811.28px;font-size:10.75px;color:#1e1e1e;font-weight:400;">$0.00</div>
<div class="t" style="left:1404px;top:811.28px;font-size:10.75px;color:#1e1e1e;font-weight:400;">$18.00</div>
<div class="t" style="left:1507px;top:811.28px;font-size:10.75px;color:#1e1e1e;font-weight:400;">$-18.00</div>
<div style="left:463px;top:837px;width:18px;height:18px;background:transparent;box-sizing:border-box;border:2px solid #0b5c97;border-radius:3px;"></div>
<div class="t" style="left:492.5px;top:836.10px;font-size:11.25px;color:#1e1e1e;font-weight:400;">Karinatest</div>
<div class="t" style="left:594.2px;top:836.02px;font-size:11.5px;color:#1e1e1e;font-weight:400;">04/02/2021</div>
<div class="t" style="left:679.3px;top:836.10px;font-size:11.25px;color:#0c5f9d;font-weight:400;">SO-0037235</div>
<div class="t" style="left:882.2px;top:836.02px;font-size:11.5px;color:#38a538;font-weight:400;">Shipped</div>
<div class="t" style="left:1302px;top:836.28px;font-size:10.75px;color:#1e1e1e;font-weight:400;">$0.00</div>
<div class="t" style="left:1404px;top:836.28px;font-size:10.75px;color:#1e1e1e;font-weight:400;">$0.00</div>
<div class="t" style="left:1507px;top:836.28px;font-size:10.75px;color:#1e1e1e;font-weight:400;">$0.00</div>
<div style="left:457px;top:1000px;width:1463px;height:1px;background:#dcdcdc;"></div>
<div style="left:1919px;top:199px;width:1px;height:801px;background:#dcdcdc;"></div>
<div style="left:1904px;top:200px;width:15px;height:800px;background:#fbfbfb;"></div>
<svg style="position:absolute;left:1906px;top:237px" width="9" height="6" viewBox="0 0 9 6"><path d="M1 5 L4.5 1.5 L8 5" fill="none" stroke="#eeeeee" stroke-width="1"/></svg>
<svg style="position:absolute;left:1906px;top:975px" width="9" height="6" viewBox="0 0 9 6"><path d="M1 1 L4.5 4.5 L8 1" fill="none" stroke="#eeeeee" stroke-width="1"/></svg>
<div class="t" style="left:1472.6px;top:1010.84px;font-size:12px;color:#1e1e1e;font-weight:400;">Total Amount:</div>
<div class="t" style="left:1550.4px;top:1010.84px;font-size:12px;color:#1e1e1e;font-weight:700;">$9,190.03</div>
<div class="t" style="left:1615.4px;top:1010.98px;font-size:11.6px;color:#1e1e1e;font-weight:400;">Total Payments:</div>
<div class="t" style="left:1701.6px;top:1010.84px;font-size:12px;color:#1e1e1e;font-weight:700;">$4,775.28</div>
<div class="t" style="left:1766.4px;top:1010.98px;font-size:11.6px;color:#1e1e1e;font-weight:400;">Open Balance:</div>
<div class="t" style="left:1845.3px;top:1010.84px;font-size:12px;color:#1e1e1e;font-weight:700;">$4,414.75</div>
<svg style="position:absolute;left:0;top:0" width="1920" height="1040" viewBox="0 0 1920 1040">
<defs><filter id="sh" x="-50%" y="-50%" width="200%" height="200%"><feGaussianBlur in="SourceAlpha" stdDeviation="1.1"/><feOffset dx="1.6" dy="1.6"/><feComponentTransfer><feFuncA type="linear" slope="0.85"/></feComponentTransfer><feMerge><feMergeNode/><feMergeNode in="SourceGraphic"/></feMerge></filter></defs>
<g filter="url(#sh)" fill="#f85a4a" stroke="#f85a4a" stroke-linejoin="round">
<path d="M779.8 304.7 L772.2 307.3 L761.3 270.0 L766.1 268.4 Z" stroke-width="1"/><circle cx="776" cy="306" r="4"/>
<path d="M759 255 L773.5 267.5 L754.2 273 Z" stroke-width="1.5"/>
<path d="M810.1 311.6 L804.9 305.4 L859.4 261.7 L862.6 265.5 Z" stroke-width="1"/><circle cx="807.5" cy="308.5" r="4"/>
<path d="M872.5 254 L867.5 271 L854 257 Z" stroke-width="1.5"/>
</g></svg>
</body></html>
